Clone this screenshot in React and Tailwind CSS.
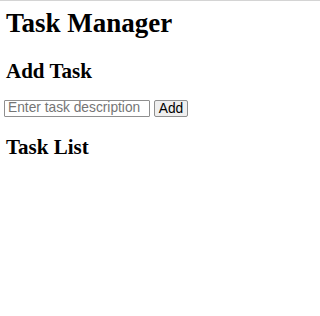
export default function App() {
  return (
    <div className="min-h-[316px] border-t border-[#d4d4d4] bg-white px-[4px] font-['Liberation_Serif',serif] text-black">
      <h1 className="mt-[7px] ml-[2px] text-[27px] leading-[31px] font-bold">Task Manager</h1>
      <h2 className="mt-[20px] ml-[2px] text-[21px] leading-[24px] font-bold">Add Task</h2>
      <div className="mt-[17px] flex items-center gap-[4px] font-['Liberation_Sans',Arial,sans-serif] text-[13.75px]">
        <input
          type="text"
          placeholder="Enter task description"
          className="h-[17px] w-[146px] rounded-[1px] border border-[#8f8f8f] px-[3px] placeholder:text-[#757575]"
        />
        <button className="flex h-[17px] w-[34px] items-center justify-center rounded-[2px] border border-[#8f8f8f] bg-[#efefef] leading-none">
          Add
        </button>
      </div>
      <h2 className="mt-[18px] ml-[2px] text-[21px] leading-[24px] font-bold">Task List</h2>
    </div>
  );
}
